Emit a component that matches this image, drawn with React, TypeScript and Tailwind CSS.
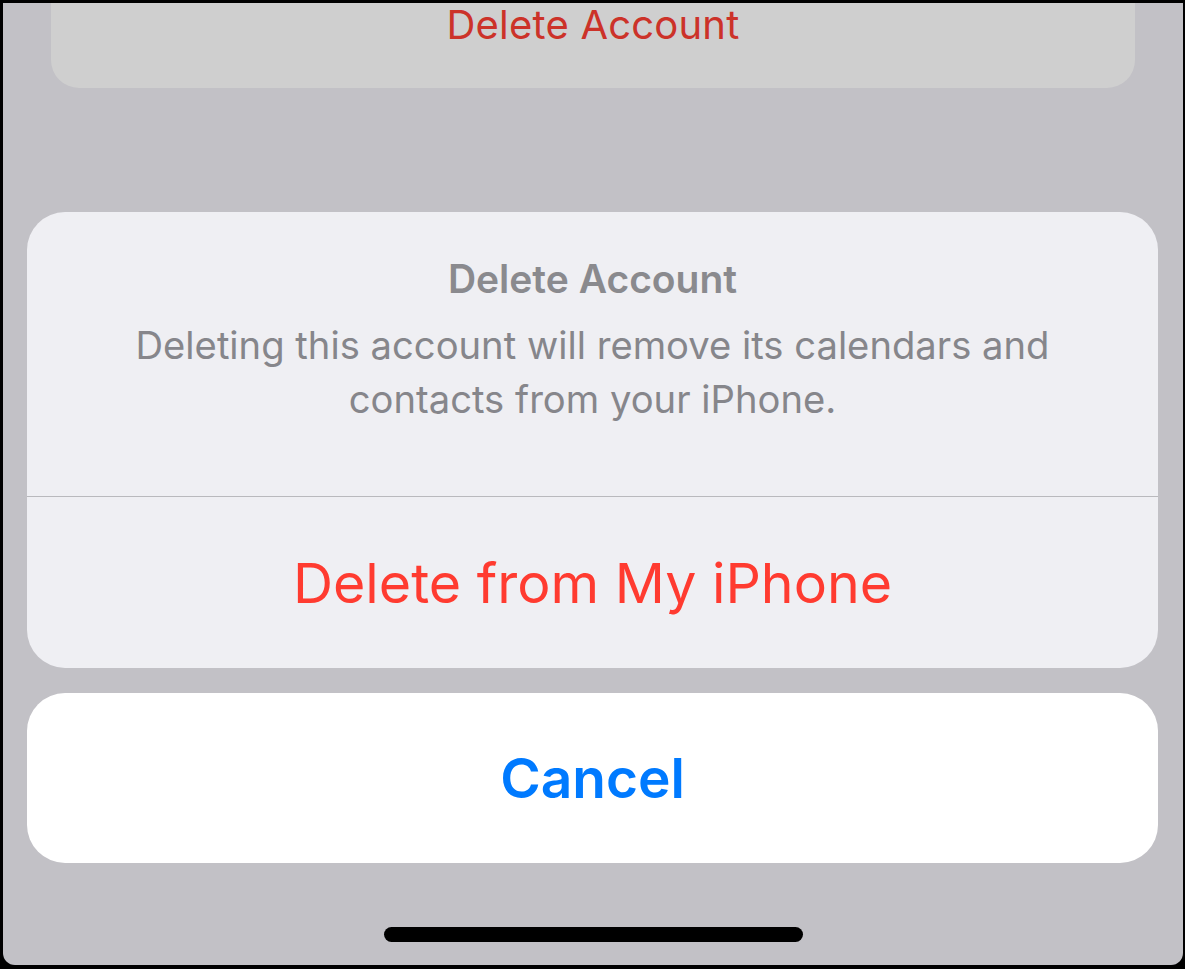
export default function App() {
  return (
    <div
      className="h-[969px] w-[1185px] bg-black pt-[3px] pr-[2px] pb-[4px] pl-[3px]"
      style={{ fontFamily: "Inter, 'Noto Sans', sans-serif" }}
    >
      <div className="flex h-full flex-col rounded-b-[12px] bg-[#c2c1c6]">
        {/* dimmed settings row behind the sheet */}
        <div className="mx-[48px] flex h-[85px] shrink-0 justify-center rounded-b-[28px] bg-[#cfcfcf]">
          <span className="text-[40px] leading-[43px] tracking-[0.2px] text-[#cc3229]">
            Delete Account
          </span>
        </div>

        <div className="mt-[124px] ml-[24px] mr-[25px] flex flex-col">
          <div className="overflow-hidden rounded-[38px] bg-[#efeff3]">
            <div className="flex h-[285px] flex-col items-center border-b border-[#b9b9bd] px-6 pt-[46px] text-center">
              <div className="text-[39px] font-semibold leading-[42px] text-[#8a8a8e]">
                Delete Account
              </div>
              <div className="mt-[18px] text-[38.2px] leading-[54px] text-[#86868b]">
                Deleting this account will remove its calendars and
                <br />
                contacts from your iPhone.
              </div>
            </div>
            <button className="flex h-[171px] w-full items-center justify-center text-[55.5px] text-[#ff3b30]">
              Delete from My iPhone
            </button>
          </div>

          <button className="mt-[25px] flex h-[170px] w-full items-center justify-center rounded-[38px] bg-white text-[55px] font-semibold text-[#007aff]">
            Cancel
          </button>
        </div>

        <div className="mt-[64px] flex justify-center">
          <div className="h-[15px] w-[419px] rounded-full bg-black" />
        </div>
      </div>
    </div>
  );
}
